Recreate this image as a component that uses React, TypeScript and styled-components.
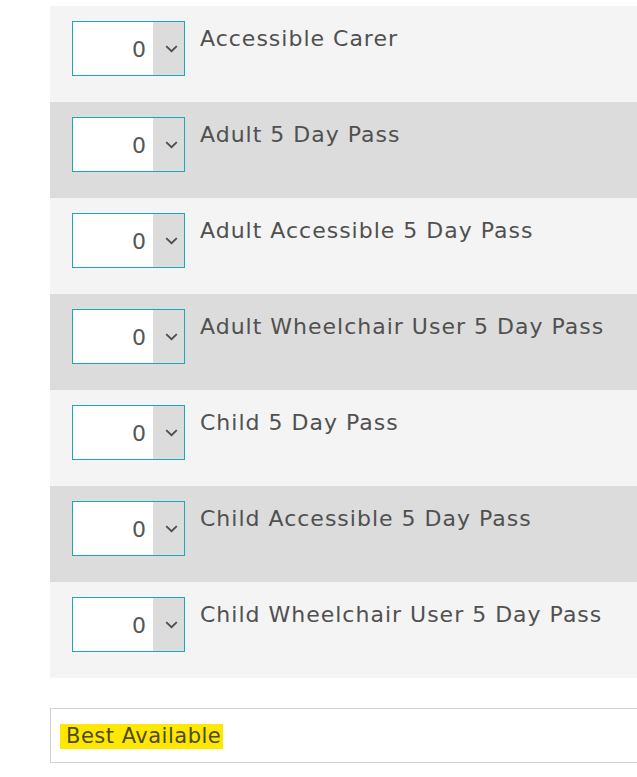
import React from 'react';
import styled, { createGlobalStyle } from 'styled-components';

const GlobalStyle = createGlobalStyle`
    body {
        margin: 0;
        background: #ffffff;
        font-family: "DejaVu Sans", "Liberation Sans", sans-serif;
        overflow: hidden;
    }
`;

const Page = styled.div`
    width: 637px;
    height: 777px;
    padding: 6px 0 0 50px;
    box-sizing: border-box;
    overflow: hidden;
`;

const List = styled.div`
    width: 620px;
`;

const Row = styled.div<{ shade: boolean }>`
    display: flex;
    align-items: flex-start;
    height: 96px;
    box-sizing: border-box;
    padding: 15px 0 0 22px;
    background: ${props => props.shade ? '#dcdcdc' : '#f4f4f4'};
`;

const Select = styled.div`
    display: flex;
    width: 113px;
    height: 55px;
    box-sizing: border-box;
    border: 1px solid #1aa9b9;
    background: #ffffff;
`;

const Value = styled.div`
    flex: 1;
    display: flex;
    align-items: center;
    justify-content: flex-end;
    padding: 2px 6px 0 0;
    font-size: 22px;
    letter-spacing: 1px;
    color: #555555;
`;

const Arrow = styled.div`
    width: 31px;
    background: #dcdcdc;
    display: flex;
    align-items: center;
    justify-content: center;
    padding: 1px 0 0 5px;
    box-sizing: border-box;
`;

const Label = styled.div`
    margin: 2px 0 0 15px;
    font-size: 22px;
    letter-spacing: 1px;
    line-height: 32px;
    color: #505050;
    white-space: nowrap;
`;

const Best = styled.div`
    margin-top: 30px;
    width: 620px;
    height: 55px;
    box-sizing: border-box;
    border: 1px solid #cfd4da;
    padding: 15px 0 0 9px;
`;

const Highlight = styled.span`
    background: #ffe800;
    color: #4d4a1c;
    font-size: 21px;
    letter-spacing: 0.5px;
    line-height: 25px;
    padding: 0 2px 0 6px;
    display: inline-block;
`;

const items = [
    'Accessible Carer',
    'Adult 5 Day Pass',
    'Adult Accessible 5 Day Pass',
    'Adult Wheelchair User 5 Day Pass',
    'Child 5 Day Pass',
    'Child Accessible 5 Day Pass',
    'Child Wheelchair User 5 Day Pass',
];

const Chevron = () => (
    <svg width="13" height="8" viewBox="0 0 13 8">
        <path d="M1.2 1.2 L6.5 6.2 L11.8 1.2" fill="none" stroke="#4a4d55" strokeWidth="1.8" />
    </svg>
);

export default function App() {
    return (
        <>
            <GlobalStyle />
            <Page>
                <List>
                    {items.map((name, i) => (
                        <Row key={name} shade={i % 2 === 1}>
                            <Select>
                                <Value>0</Value>
                                <Arrow><Chevron /></Arrow>
                            </Select>
                            <Label>{name}</Label>
                        </Row>
                    ))}
                </List>
                <Best>
                    <Highlight>Best Available</Highlight>
                </Best>
            </Page>
        </>
    );
}
